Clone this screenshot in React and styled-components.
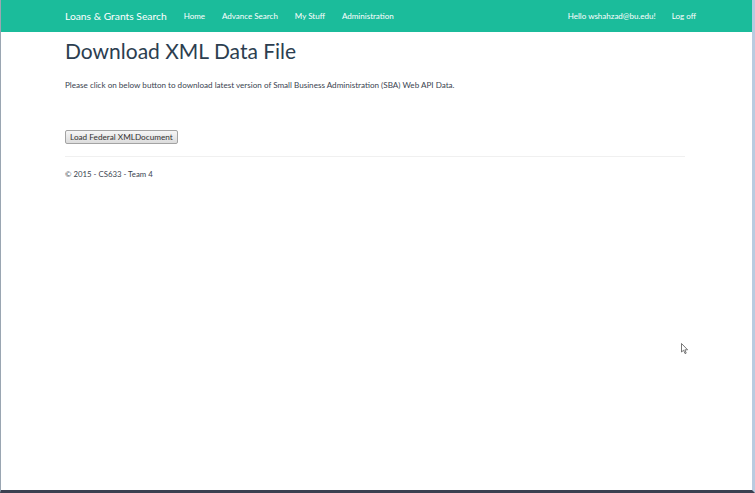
import React from "react";
import styled, { createGlobalStyle } from "styled-components";

const GlobalStyle = createGlobalStyle`
  html, body {
    margin: 0;
    padding: 0;
    background: #ffffff;
  }
  body {
    font-family: Lato, "Open Sans", sans-serif;
    color: #2c3e50;
  }
`;

const Frame = styled.div`
  position: relative;
  width: 755px;
  height: 493px;
  box-sizing: border-box;
  display: flex;
  flex-direction: column;
  border-left: 1px solid #9aa6b2;
  border-right: 3px solid #b9cbe0;
  border-bottom: 3px solid #3b4050;
  background: #ffffff;
  overflow: hidden;
`;

const Navbar = styled.nav`
  height: 32px;
  flex-shrink: 0;
  background: #1bbc9b;
  display: flex;
  align-items: center;
  padding: 0 56px 0 64px;
  color: #ffffff;
`;

const Brand = styled.a`
  font-size: 10.3px;
  margin-right: 17px;
  white-space: nowrap;
`;

const NavList = styled.div`
  display: flex;
  align-items: center;
  gap: 17px;
  flex: 1;
`;

const NavRight = styled.div`
  display: flex;
  align-items: center;
  gap: 16px;
`;

const NavLink = styled.a`
  font-size: 8px;
  white-space: nowrap;
  color: #ffffff;
`;

const Container = styled.main`
  width: 620px;
  padding-left: 64px;
  display: flex;
  flex-direction: column;
`;

const Heading = styled.h2`
  margin: 6px 0 0;
  font-size: 21px;
  font-weight: 400;
  line-height: 26px;
  color: #2c3e50;
`;

const Lead = styled.p`
  margin: 16px 0 0;
  font-size: 8.1px;
  line-height: 10px;
  color: #3a4450;
`;

const LoadButton = styled.button`
  align-self: flex-start;
  margin-top: 40px;
  height: 14px;
  padding: 0 4px;
  font-family: Lato, "Open Sans", sans-serif;
  font-size: 8.2px;
  color: #333;
  background: linear-gradient(#f6f6f6, #dcdcdc);
  border: 1px solid #a3a3a3;
  border-radius: 2px;
`;

const Rule = styled.hr`
  margin: 12px 0 0;
  border: 0;
  border-top: 1px solid #f0f0f0;
`;

const Footer = styled.footer`
  margin-top: 12px;
  font-size: 7.8px;
  line-height: 10px;
  color: #3a4450;
`;

const Cursor = styled.svg`
  position: absolute;
  left: 680px;
  top: 343px;
`;

export default function App() {
  return (
    <>
      <GlobalStyle />
      <Frame>
        <Navbar>
          <Brand>Loans &amp; Grants Search</Brand>
          <NavList>
            <NavLink>Home</NavLink>
            <NavLink>Advance Search</NavLink>
            <NavLink>My Stuff</NavLink>
            <NavLink>Administration</NavLink>
          </NavList>
          <NavRight>
            <NavLink>Hello wshahzad@bu.edu!</NavLink>
            <NavLink>Log off</NavLink>
          </NavRight>
        </Navbar>
        <Container>
          <Heading>Download XML Data File</Heading>
          <Lead>
            Please click on below button to download latest version of Small
            Business Administration (SBA) Web API Data.
          </Lead>
          <LoadButton>Load Federal XMLDocument</LoadButton>
          <Rule />
          <Footer>© 2015 - CS633 - Team 4</Footer>
        </Container>
        <Cursor width="8" height="12" viewBox="0 0 8 12">
          <path
            d="M0.5 0.5 L0.5 9 L2.6 7.2 L4 10.6 L5.2 10.1 L3.9 6.8 L6.6 6.8 Z"
            fill="#ffffff"
            stroke="#555"
            strokeWidth="0.8"
          />
        </Cursor>
      </Frame>
    </>
  );
}
